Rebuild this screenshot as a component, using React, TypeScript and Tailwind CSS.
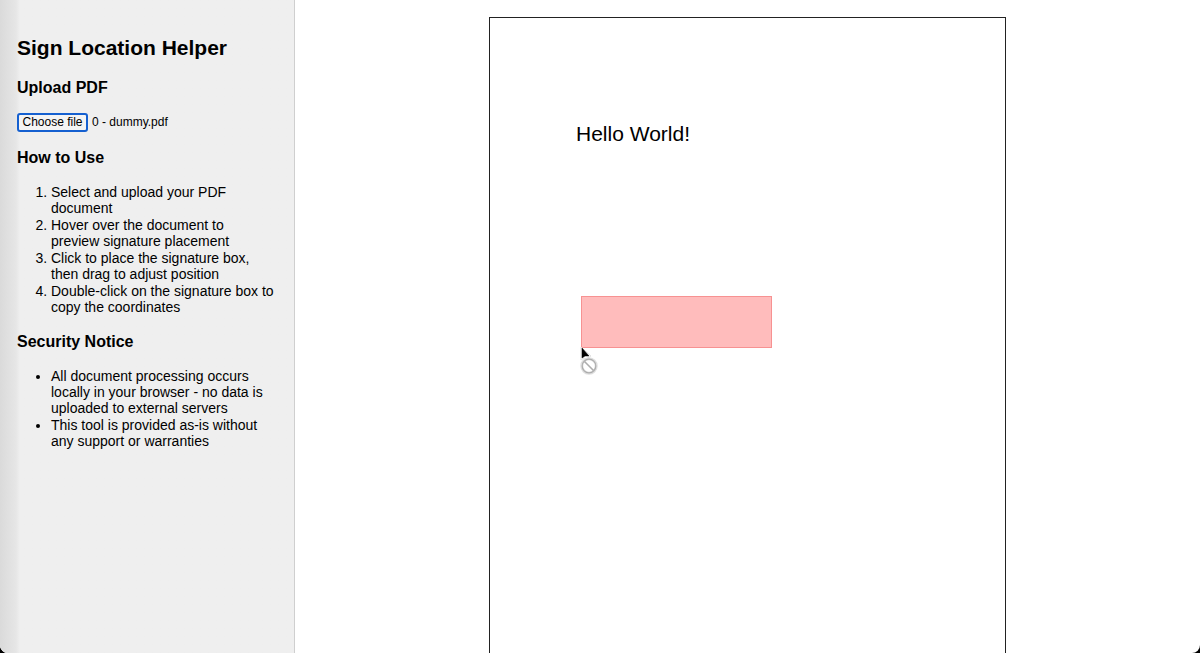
import { useRef, useState } from "react";

const steps = [
  "Select and upload your PDF document",
  "Hover over the document to preview signature placement",
  "Click to place the signature box, then drag to adjust position",
  "Double-click on the signature box to copy the coordinates",
];

const notices = [
  "All document processing occurs locally in your browser - no data is uploaded to external servers",
  "This tool is provided as-is without any support or warranties",
];

function FilePicker() {
  const input = useRef<HTMLInputElement>(null);
  const [name, setName] = useState("0 - dummy.pdf");
  return (
    <div className="mt-[14px] flex h-5 items-center gap-1 text-xs">
      <input
        ref={input}
        id="pdf"
        type="file"
        accept="application/pdf"
        aria-labelledby="upload-title"
        className="hidden"
        onChange={(e) => setName(e.target.files?.[0]?.name ?? name)}
      />
      <button
        type="button"
        onClick={() => input.current?.click()}
        className="flex h-[19px] w-[71px] items-center justify-center whitespace-nowrap rounded-[3px] border-2 border-[#1560d0] bg-[#f4f4f4] text-xs leading-3"
      >
        Choose file
      </button>
      <label htmlFor="pdf">{name}</label>
    </div>
  );
}

function Cursor() {
  return (
    <svg
      aria-hidden="true"
      viewBox="0 0 20 30"
      className="absolute -left-[2px] top-[50px] h-[30px] w-5"
      fill="none"
    >
      <path d="M1 0v13l3-2 2 1 5-3Z" fill="#fff" stroke="#e2e2e2" strokeWidth="1" />
      <path d="M2 1v10l3-2h4Z" fill="#000" stroke="#000" strokeWidth="0.5" />
      <circle cx="9" cy="19" r="7.2" stroke="#dedede" strokeWidth="3" fill="#fff" />
      <circle cx="9" cy="19" r="6.8" stroke="#adadad" strokeWidth="1.2" />
      <path d="m4.5 14.5 9 9" stroke="#adadad" strokeWidth="1.6" />
    </svg>
  );
}

export default function App() {
  return (
    <div className="h-screen bg-black font-['Liberation_Sans',Arial,sans-serif] text-black">
      <div className="flex h-full overflow-hidden rounded-b-lg bg-white">
        <aside className="w-[295px] shrink-0 border-r border-[#cfcfcf] bg-[#efefef] bg-linear-to-r from-[#dadada] from-0% via-[#e6e6e6] via-[16px] to-[#efefef] to-[20px] pl-[17px] pr-[19px] pt-9">
          <h1 className="text-[21px] font-bold leading-6">Sign Location Helper</h1>
          <h2 id="upload-title" className="mt-[18px] text-base font-bold leading-5">
            Upload PDF
          </h2>
          <FilePicker />
          <h2 className="mt-4 text-base font-bold leading-5">How to Use</h2>
          <ol className="mt-4 list-decimal pl-[34px] text-sm leading-4">
            {steps.map((step) => (
              <li key={step} className="pb-px">{step}</li>
            ))}
          </ol>
          <h2 className="mt-4 text-base font-bold leading-5">Security Notice</h2>
          <ul className="mt-4 list-disc pl-[34px] text-sm leading-4">
            {notices.map((notice) => (
              <li key={notice} className="pb-px">{notice}</li>
            ))}
          </ul>
        </aside>
        <main className="flex min-w-0 flex-1 items-start justify-center overflow-hidden pt-[17px]">
          <div className="relative aspect-[210/297] w-[517px] border border-[#222] px-[86px] pt-[104px]">
            <p className="text-[21px] leading-6">Hello World!</p>
            <div className="absolute left-[91px] top-[278px] h-[52px] w-[191px] border border-[#f79292] bg-[#ffbcbc]">
              <Cursor />
            </div>
          </div>
        </main>
      </div>
    </div>
  );
}
